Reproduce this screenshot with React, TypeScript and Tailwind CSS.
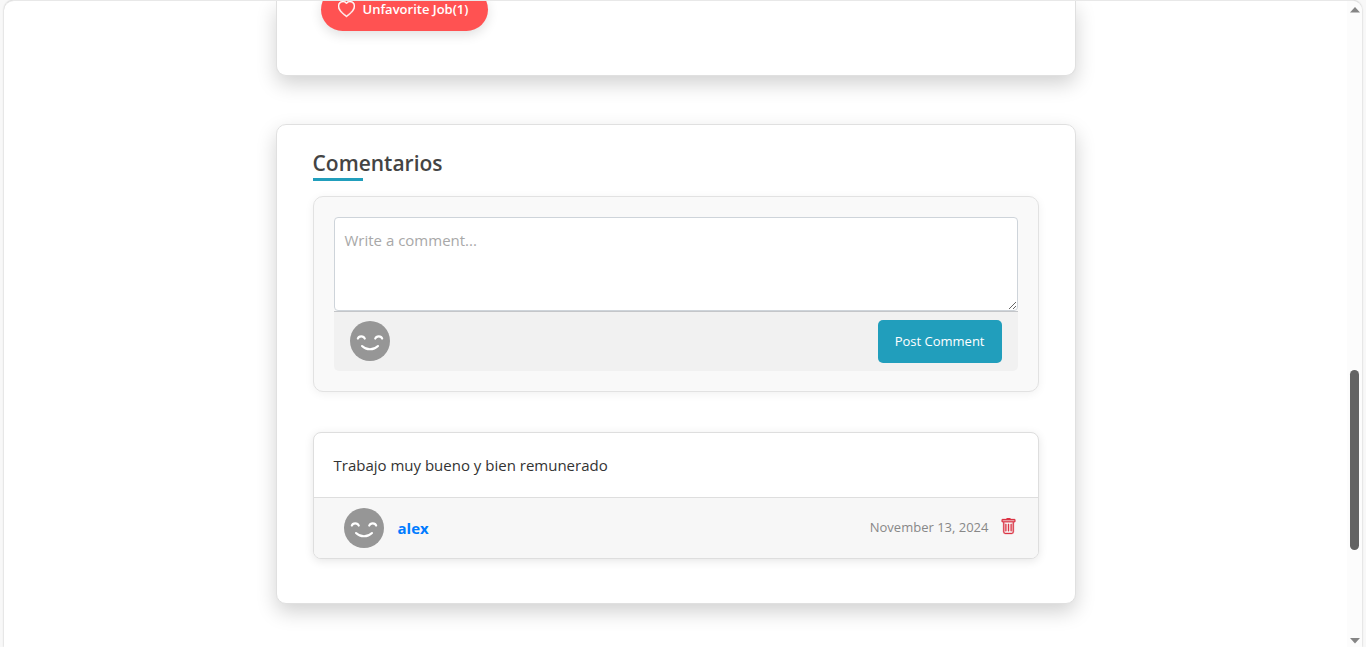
import { BsHeart, BsTrash } from "react-icons/bs";

function Avatar() {
  return (
    <svg className="size-10 shrink-0" viewBox="0 0 40 40" fill="none" role="img" aria-label="Avatar">
      <circle cx="20" cy="20" r="20" fill="#969696" />
      <g stroke="#fff" strokeWidth="2.1" strokeLinecap="round">
        <path d="M7.800 17.600c.9-2.900 5.800-3.100 7 0" />
        <path d="M25.200 17.600c1.200-3.100 6.100-2.900 7 0" />
        <path d="M12 25c4.400 4.400 11.600 4.400 16 0" />
      </g>
    </svg>
  );
}

function ScrollRail() {
  return (
    <div className="flex w-[15px] shrink-0 flex-col items-center justify-between bg-[#fcfcfc] py-[3px]" aria-hidden="true">
      <svg className="mt-[3px] h-[6px] w-[10px]" viewBox="0 0 10 6">
        <path d="M5 0L10 5.500H0z" fill="#858585" />
      </svg>
      <div className="flex w-full flex-1 flex-col items-center">
        <div className="grow-[358]" />
        <div className="w-[9px] grow-[180] rounded-full bg-[#636363]" />
        <div className="grow-[88]" />
      </div>
      <svg className="h-[6px] w-[10px]" viewBox="0 0 10 6">
        <path d="M5 5.500L0 0h10z" fill="#858585" />
      </svg>
    </div>
  );
}

const card =
  "w-full max-w-[800px] rounded-[10px] border border-[#e0e0e0] bg-white shadow-[0_8px_20px_rgba(0,0,0,0.18)]";

export default function App() {
  return (
    <div className="h-screen overflow-hidden bg-[#f8f8f8] px-1 font-['Open_Sans','Noto_Sans',sans-serif]">
      <div className="flex h-full overflow-hidden rounded-t-[10px] border-t border-[#e8e8e8] bg-white shadow-[0_0_2px_rgba(0,0,0,0.25)]">
        <main className="flex min-w-0 flex-1 flex-col items-center gap-12 overflow-hidden">
          <section className={`${card} flex h-[75px] shrink-0 flex-col items-start justify-end rounded-t-none border-t-0 px-11 pb-11`}>
            <button
              type="button"
              className="flex h-[43px] shrink-0 items-center gap-2 rounded-full bg-[#ff5252] pr-5 pl-[17px] text-[13px] font-semibold text-white shadow-[0_4px_12px_rgba(0,0,0,0.12)]"
            >
              <BsHeart className="size-[17px]" stroke="currentColor" strokeWidth={0.5} />
              Unfavorite Job(1)
            </button>
          </section>

          <section className={`${card} shrink-0 px-9 pt-6 pb-11`}>
            <h2 className="text-[21px] leading-[29px] font-semibold text-[#444]">Comentarios</h2>
            <div className="h-[3px] w-[50px] bg-[#219ebc]" />

            <form
              className="mt-[15px] rounded-[10px] border border-[#e2e2e2] bg-[#f9f9f9] p-5 shadow-[0_2px_10px_rgba(0,0,0,0.06)]"
              onSubmit={(e) => e.preventDefault()}
            >
              <textarea
                aria-label="Write a comment"
                placeholder="Write a comment..."
                className="block h-[94px] w-full resize rounded border border-[#ced4da] bg-white px-[10px] py-[11px] text-[15px] leading-[22px] text-[#333] placeholder:text-[#a8a8a8] focus:outline-none"
              />
              <div className="flex h-[60px] items-start justify-between rounded-b-[5px] border-t border-[#c4c6c9] bg-[#f1f1f1] px-4 pt-2">
                <div className="pt-px">
                  <Avatar />
                </div>
                <button type="submit" className="h-[43px] rounded-[5px] bg-[#219ebc] px-[17px] text-[13px] text-white">
                  Post Comment
                </button>
              </div>
            </form>

            <article className="mt-10 overflow-hidden rounded-lg border border-[#dedede] bg-white shadow-[0_2px_10px_rgba(0,0,0,0.1)]">
              <p className="p-5 text-[15px] leading-6 text-[#333]">Trabajo muy bueno y bien remunerado</p>
              <footer className="flex h-[61px] items-center border-t border-[#dedede] bg-[#f7f7f7] pr-[21px] pl-[30px]">
                <Avatar />
                <a href="#alex" className="ml-[14px] text-[15px] font-bold text-[#007bff]">
                  alex
                </a>
                <time dateTime="2024-11-13" className="ml-auto text-[13px] text-[#888]">
                  November 13, 2024
                </time>
                <button type="button" aria-label="Delete comment" className="ml-[11px] pb-[3px] text-[#dc3545]">
                  <BsTrash className="size-[17px]" stroke="currentColor" strokeWidth={0.3} />
                </button>
              </footer>
            </article>
          </section>
        </main>
        <ScrollRail />
      </div>
    </div>
  );
}
